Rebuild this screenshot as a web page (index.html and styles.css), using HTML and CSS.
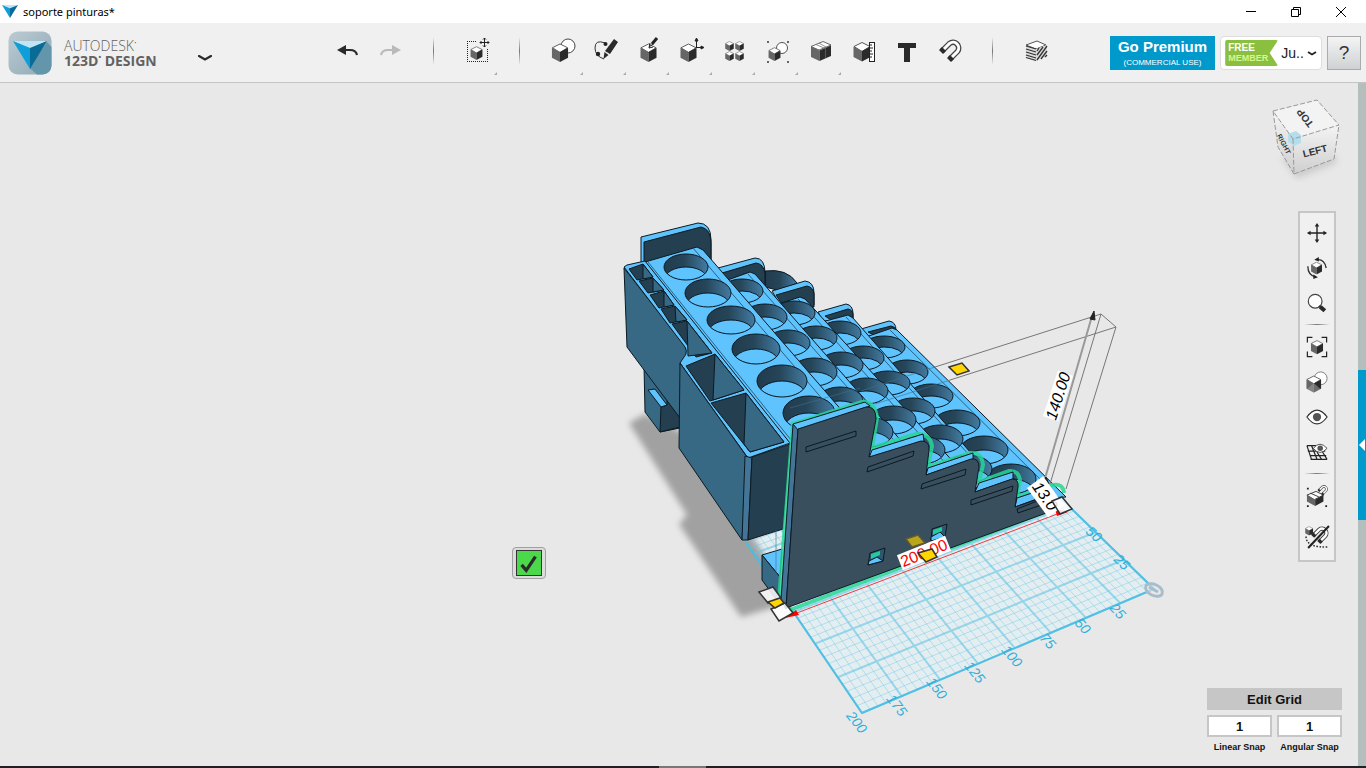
FILE: index.html
```html
<!DOCTYPE html>
<html lang="en">
<head>
    <meta charset="UTF-8">
    <meta name="viewport" content="width=device-width, initial-scale=1.0">
    <title>soporte pinturas*</title>
    <link rel="stylesheet" href="styles.css">
</head>
<body>
    <!-- Shared icon shapes -->
    <svg class="sprite" aria-hidden="true">
        <symbol id="cube" viewBox="0 0 18 20">
            <path d="M1 5L9 1l8 4-8 5z" fill="#fff" stroke="#555" stroke-width="1"/>
            <path d="M.5 5L9 9.500V20L.5 15.500z" fill="#666"/>
            <path d="M17.500 5L9 9.500V20l8.500-4.500z" fill="#2a2a2a"/>
        </symbol>
        <symbol id="logo" viewBox="0 0 34 28">
            <path d="M0 0h34L17 7z" fill="#bfe6f7"/>
            <path d="M0 0l17 7v21z" fill="#0f9fd8"/>
            <path d="M34 0L17 7v21z" fill="#0a6c96"/>
        </symbol>
        <symbol id="magnet" viewBox="0 0 24 24">
            <path d="M4 12L11.500 4.500a5.700 5.700 0 0 1 8 8L12 20" fill="none" stroke="#444" stroke-width="5.500"/>
            <path d="M4 12L11.500 4.500a5.700 5.700 0 0 1 8 8L12 20" fill="none" stroke="#fff" stroke-width="3"/>
            <path d="M1 11l3-3 4 4-3 3zM9 19l3-3 4 4-3 3z" fill="#2a2a2a"/>
        </symbol>
    </svg>

    <header class="title-bar">
        <svg class="title-logo" viewBox="0 0 34 28" preserveAspectRatio="none"><use href="#logo"/></svg>
        <span class="title-text">soporte pinturas*</span>
        <div class="window-controls">
            <button type="button" aria-label="Minimize"><svg viewBox="0 0 12 12"><path d="M1 5.500h10" /></svg></button>
            <button type="button" aria-label="Restore"><svg viewBox="0 0 12 12"><path d="M1.500 3.500h7v7h-7zM3.500 3.500v-2h7v7h-2"/></svg></button>
            <button type="button" aria-label="Close"><svg viewBox="0 0 12 12"><path d="M1 1l10 10M11 1L1 11"/></svg></button>
        </div>
    </header>

    <div class="toolbar">
        <div class="brand">
            <svg class="brand-logo" viewBox="0 0 44 44">
                <defs>
                    <linearGradient id="tile" x2="1" y2="1"><stop offset="0" stop-color="#bccbd3"/><stop offset="1" stop-color="#8fa9b6"/></linearGradient>
                </defs>
                <rect x=".5" y=".5" width="43" height="43" rx="9" fill="url(#tile)"/>
                <path d="M39 11l4.500 5v19q-1 8-9 8.500H29l-8-7z" fill="#6496ab"/>
                <use href="#logo" x="5" y="10" width="34" height="28"/>
            </svg>
            <div class="brand-name">
                <span class="brand-company">AUTODESK<sup>•</sup></span>
                <span class="brand-product">123D<sup>•</sup> DESIGN</span>
            </div>
            <button type="button" class="brand-menu" aria-label="Application menu">
                <svg viewBox="0 0 14 6"><path d="M1 1l6 3.500L13 1" fill="none" stroke="#2a2a2a" stroke-width="2.200" stroke-linecap="round"/></svg>
            </button>
        </div>

        <nav class="tools">
            <button type="button" class="tool" aria-label="Undo">
                <svg viewBox="0 0 26 26"><path d="M8 13h7q6 0 7 5" fill="none" stroke="#2a2a2a" stroke-width="2.200"/><path d="M2 13l9-5v10z" fill="#2a2a2a"/></svg>
            </button>
            <button type="button" class="tool" aria-label="Redo">
                <svg viewBox="0 0 26 26"><path d="M17 13h-7q-6 0-7 5" fill="none" stroke="#b9b9b9" stroke-width="2.200"/><path d="M23 13l-9-5v10z" fill="#b9b9b9"/></svg>
            </button>
            <span class="divider"></span>
            <button type="button" class="tool has-menu" aria-label="Transform">
                <svg viewBox="0 0 26 26">
                    <path d="M3 4.500h10M3.500 4v20M3 24.500h21M23.500 12v12" fill="none" stroke="#222" stroke-dasharray="1 1"/>
                    <use href="#cube" x="6" y="9" width="13" height="14"/>
                    <path d="M16 5.500h9M20.500 1v9M19 2.500L20.500 1 22 2.500M19 8.500l1.500 1.500L22 8.500M17.500 4L16 5.500 17.500 7M23.500 4L25 5.500 23.500 7" fill="none" stroke="#222"/>
                </svg>
            </button>
            <span class="divider"></span>
            <button type="button" class="tool has-menu" aria-label="Primitives">
                <svg viewBox="0 0 26 26"><circle cx="18" cy="9" r="7" fill="#fff" stroke="#444"/><use href="#cube" x="1" y="6" width="18" height="19"/></svg>
            </button>
            <button type="button" class="tool has-menu" aria-label="Sketch">
                <svg viewBox="0 0 26 26">
                    <path d="M12 6Q2 2 2 11q0 8 9 11" fill="none" stroke="#333"/>
                    <circle cx="12.500" cy="7" r="2" fill="#222"/><circle cx="5" cy="17" r="2.200" fill="#222"/>
                    <path d="M21 2l4 3-8 12-5-3zM11.500 15l4 3-5 4z" fill="#2a2a2a"/>
                </svg>
            </button>
            <button type="button" class="tool has-menu" aria-label="Construct">
                <svg viewBox="0 0 26 26"><use href="#cube" x="4" y="6" width="17" height="19"/><path d="M21 1l-5 6" stroke="#222" stroke-width="3"/><path d="M17 7l-4 3M14 6l-1 5 4-1" fill="none" stroke="#222"/></svg>
            </button>
            <button type="button" class="tool has-menu" aria-label="Modify">
                <svg viewBox="0 0 26 26"><use href="#cube" x="1" y="6" width="17" height="19"/><path d="M17.500 11V2M16 4l1.500-3L19 4zM17 10.500h7M22 9l3 1.500-3 1.500z" fill="#222" stroke="#222"/></svg>
            </button>
            <button type="button" class="tool has-menu" aria-label="Pattern">
                <svg viewBox="0 0 26 26"><use href="#cube" x="3" y="4" width="9" height="10"/><use href="#cube" x="13" y="4" width="9" height="10"/><use href="#cube" x="3" y="14" width="9" height="10"/><use href="#cube" x="13" y="14" width="9" height="10"/></svg>
            </button>
            <button type="button" class="tool has-menu" aria-label="Grouping">
                <svg viewBox="0 0 26 26"><path d="M2 4h2v2H2zM22 4h2v2h-2zM2 24h2v2H2zM22 24h2v2h-2z" fill="#666"/><circle cx="17" cy="11" r="5.500" fill="#fff" stroke="#555"/><use href="#cube" x="3" y="10" width="13" height="14"/></svg>
            </button>
            <button type="button" class="tool has-menu" aria-label="Combine">
                <svg viewBox="0 0 26 26">
                    <path d="M3 9.500l12-5 8 3.500-12 5z" fill="#fff" stroke="#444" stroke-width=".8"/><path d="M8 7.500l8 3.500M11 6l7 4" fill="none" stroke="#777" stroke-width=".8"/>
                    <path d="M3 9.500l8.500 4V24L3 20z" fill="#666"/><path d="M11.500 13.500L23 8.500V19l-11.500 5z" fill="#2a2a2a"/><path d="M17.500 11v10" stroke="#777" stroke-width=".6"/>
                </svg>
            </button>
            <button type="button" class="tool" aria-label="Measure">
                <svg viewBox="0 0 26 26"><use href="#cube" x="2" y="4" width="18" height="21"/><rect x="18.500" y="5.500" width="5" height="19" fill="#fff" stroke="#222"/><path d="M19 8h2M19 11h3M19 14h2M19 17h3M19 20h2" stroke="#222"/></svg>
            </button>
            <button type="button" class="tool" aria-label="Text">
                <svg viewBox="0 0 26 26"><path d="M4 6h18v5h-6v14h-6V11H4z" fill="#2a2a2a"/></svg>
            </button>
            <button type="button" class="tool" aria-label="Snap">
                <svg viewBox="0 0 26 26"><use href="#magnet" x="1" y="2" width="24" height="24"/></svg>
            </button>
            <span class="divider"></span>
            <button type="button" class="tool" aria-label="Material">
                <svg viewBox="0 0 26 26">
                    <path d="M3 8l11-4 9 4-10 4z" fill="#fff" stroke="#555"/>
                    <path d="M3 9l10 3v12L3 20zM13 12l11-4v11l-11 5z" fill="#ddd"/>
                    <path d="M3 9l10 3M3 12l10 3M3 15l10 3M3 18l10 3M3 20.500l10 3M14 23L24 9M14 18l6-8M14 14l2-3M18 22l6-8M22 20l2-2" stroke="#333" stroke-width="1.300"/>
                </svg>
            </button>
        </nav>

        <div class="account">
            <a href="#premium" class="premium">
                <span class="premium-title">Go Premium</span>
                <span class="premium-note">(COMMERCIAL USE)</span>
            </a>
            <button type="button" class="member">
                <span class="badge"><span class="badge-free">FREE</span><span class="badge-member">MEMBER</span></span>
                <span>Ju..</span>
                <svg viewBox="0 0 10 5"><path d="M1 1l4 2.500L9 1" fill="none" stroke="#222" stroke-width="1.800"/></svg>
            </button>
            <button type="button" class="help">?</button>
        </div>
    </div>

    <main class="workspace">
        <div class="canvas">
            <svg class="scene" viewBox="0 83 1358 683" preserveAspectRatio="xMidYMid meet">
                <defs>
                    <filter id="soft"><feGaussianBlur stdDeviation="3"/></filter>
                    <linearGradient id="wall"><stop offset="0" stop-color="#213b4d"/><stop offset=".45" stop-color="#264558"/><stop offset="1" stop-color="#437ca3"/></linearGradient>
                </defs>

                <path id="gridFill" class="grid-fill"/>
                <path class="shadow" d="M629 423l16-9 40 20 85 130 8 42-37 11-62-93 8-9z"/>
                <path id="gridMinor" class="grid-minor"/>
                <path id="gridMajor" class="grid-major"/>
                <path id="gridEdge" class="grid-edge"/>
                <g class="grid-label">
                    <text transform="translate(857 722) rotate(52)">200</text>
                    <text transform="translate(897 705) rotate(52)">175</text>
                    <text transform="translate(937 688) rotate(52)">150</text>
                    <text transform="translate(975 672) rotate(51)">125</text>
                    <text transform="translate(1012 656) rotate(50)">100</text>
                    <text transform="translate(1048 641) rotate(49)">75</text>
                    <text transform="translate(1083 626) rotate(48)">50</text>
                    <text transform="translate(1118 611) rotate(47)">25</text>
                    <text transform="translate(1122 562) rotate(43)">25</text>
                    <text transform="translate(1094 534) rotate(42)">50</text>
                </g>
                <ellipse class="origin" cx="1154" cy="590" rx="9" ry="5.500" transform="rotate(25 1154 590)"/>
                <path d="M1149 587l9 5" stroke="#a9bccb" stroke-width="3"/>

                <!-- Back supports -->
                <g class="solid">
                    <path class="light" d="M641 237l57-14q13 0 13 17v26h-70z"/>
                    <path class="dark" d="M644 242l57-15q10 2 10 16v23h-67z"/>
                    <path d="M765 271q22-3 32 12l-16 8-16-4z" fill="url(#wall)"/>
                    <path class="light" d="M718 268l37-10q10 0 10 15v12h-40z"/>
                    <path class="dark" d="M722 273l34-10q8 1 9 11v12h-35z"/>
                    <path class="light" d="M772 291l33-10q9 1 9 12v12h-34z"/>
                    <path class="dark" d="M776 295l31-9q6 1 7 8v13h-30z"/>
                    <path class="light" d="M818 312l28-8q7 1 7 10v7h-30z"/>
                    <path class="dark" d="M825 316l23-7q5 1 5 6v5h-22z"/>
                    <path class="light" d="M861 329l28-8q7 1 7 9v6h-30z"/>
                    <path class="dark" d="M868 332l23-6q5 1 5 4v5h-22z"/>
                </g>

                <!-- Shelves with round cups, filled by scene.js -->
                <g id="tiers"></g>

                <!-- Side trays -->
                <g class="solid">
                    <path class="side" d="M644 366l36 50v12l-20 4-15-20z"/>
                    <path class="dark" d="M661 407l6-2v-20l13 22v20l-20 5z"/>
                    <path class="light" d="M648 390l7-1 12 16-6 2z"/>
                    <path class="side" d="M624 268l61 78 2 6v65l-7 1-33-44-20-27z"/>
                    <path class="light" d="M624 267l3-2 18-4 145 182-42 15-68-95 6-9q1-4-1-7z"/>
                    <path class="dark" d="M629 269l14-5 10 13-16 3zM639 281l14-3 11 12-16 3zM650 295l14-4 10 14-15 3zM661 309l14-3 12 14-17 3zM672 324l15-3 25 32-16 4zM686 366l29-12 29 36-34 11zM711 403l35-10 38 49-34 10z"/>
                    <path class="side" d="M643 264l10 13-10 2zM653 278l11 12-11 2zM664 291l10 14-10 2zM675 306l12 14-11 2zM687 321l25 32-24 3zM715 354l29 36-31 10zM746 393l38 49-34 10-6-8z"/>
                    <path class="side" d="M680 363l67 94-5 83-63-92z"/>
                    <path class="post" d="M745 456l7 2-4 82h-6z"/>
                    <path class="dark" d="M752 457l38-13-7 85-35 11z"/>
                    <path class="light" d="M762 555l20-6-2 28z"/>
                    <path class="side" d="M762 555l18 22-2 25-16-22z"/>
                </g>

                <path class="wire" d="M935 367l166-53M947 381l169-54M1101 314l15 13M1101 314l-51 170M1116 327l-50 162"/>
                <path class="wire faint" d="M935 367l-74 24M947 381l-72 23M790 408l70-20M776 530v50"/>

                <!-- Selected front support -->
                <path class="outline" d="M779 600l14-176 69-22q13-1 15 16l-5 30 44-14q14-1 16 12l-4 21 42-14q12-1 13 12l-4 17 30-11q10-1 11 10l-3 16 36-12q10-2 11 8M790 610l265-102"/>
                <g class="solid">
                    <path class="post" d="M793 424l5 5-12 180-5-9z"/>
                    <path class="light" d="M793 424l72-22 5 4-72 24zM872 450l51-16 1 7-55 17zM928 468l45-15v6l-47 16zM979 483l34-11v7l-38 13zM1017 498l33-11 3 6-38 14z"/>
                    <path class="front" d="M798 429l68-22q10-1 10 12l-7 38 52-16q9 0 8 9l-3 25 45-16q8-1 8 8l-4 25 37-13q7 0 6 8l-3 20 38-13 7 14-274 100z"/>
                    <path class="slot" d="M806 447l50-16v5l-50 16zM868 467l46-16-1 5-46 16zM922 484l44-15-1 6-44 14zM971 500l42-14-1 5-41 14zM1017 509l28-11 2 5-29 10z"/>
                    <path class="slot hole" d="M870 553l15-5-2 13-15 4zM932 529l15-5-2 13-14 4z"/>
                    <path class="light" d="M869 561l8-4 6 4-15 4zM931 537l9-5 5 5-14 4z"/>
                </g>
                <path class="glint" d="M871 554l9-3v4l-9 4zM933 530l9-3v4l-9 4z"/>

                <!-- Dimensions and handles -->
                <path class="axis" d="M1092 316l-48 166"/>
                <path class="arrow" d="M1094 311l1 9-5-1zM1046 477l3 7-8-2z"/>
                <path class="red-line" d="M789 616l276-105"/>
                <path class="red-arrow" d="M785 618l11-8 3 5zM1068 512l-13-3 2 7z"/>
                <g class="dimension">
                    <g transform="translate(1058 396) rotate(-72)"><rect x="-24" y="-8" width="48" height="16"/><text>140.00</text></g>
                    <g transform="translate(1045 496) rotate(54)"><rect x="-17" y="-10" width="36" height="20"/><text>13.0</text></g>
                    <g class="red" transform="translate(924 553) rotate(-22)"><rect x="-26" y="-8" width="52" height="16"/><text>200.00</text></g>
                </g>
                <path class="handle" d="M949 367l13-4 7 8-12 4z"/>
                <path class="handle dim" d="M906 539l12-4 7 8-13 4z"/>
                <path class="handle" d="M918 553l14-4 5 8-11 5z"/>
                <path class="handle plain" d="M759 592l14-5 8 11-13 5zM771 609l14-6 8 10-14 8zM1052 501l10-4 10 12-12 5z"/>
                <path class="handle" d="M768 602l12-4 4 5-9 5z"/>
            </svg>

            <button type="button" class="confirm" aria-label="Confirm">
                <svg viewBox="0 0 26 26"><path d="M5 15l5 6L20 6" fill="none" stroke="#2a2a2a" stroke-width="3.500"/></svg>
            </button>

            <svg class="view-cube" viewBox="1266 94 80 90">
                <defs>
                    <linearGradient id="face" x2="0" y2="1"><stop offset="0" stop-color="#f4f4f4"/><stop offset="1" stop-color="#cfcfcf"/></linearGradient>
                </defs>
                <path d="M1281 158l16 21 40-16-2-8z" fill="#bbb" opacity=".6" filter="url(#soft)"/>
                <path d="M1273 111l20 28 1 35-16-27z" fill="url(#face)"/>
                <path d="M1293 139l46-14-5 34-40 15z" fill="url(#face)"/>
                <path d="M1273 111l44-11 22 25-46 14z" fill="#f3f3f3"/>
                <g class="cube-label">
                    <text transform="translate(1315 151) rotate(-14)">LEFT</text>
                    <text transform="translate(1305 118) rotate(232)">TOP</text>
                    <text class="small" transform="translate(1284 144) rotate(63)">RIGHT</text>
                </g>
                <path d="M1288 134l8-3 5 4v8l-7 3-6-4z" fill="#b5deec"/>
                <path d="M1273 111l44-11 22 25-46 14zM1273 111l5 36 16 27-1-35M1294 174l40-15 5-34" fill="none" stroke="#999" stroke-dasharray="5 2"/>
            </svg>

            <nav class="view-tools">
                <button type="button" aria-label="Pan"><svg viewBox="0 0 24 24"><path d="M12 3v18M3 12h18" stroke="#222" stroke-width="1.500"/><path d="M12 1l2.500 4h-5zM12 23l2.500-4h-5zM1 12l4-2.500v5zM23 12l-4-2.500v5z" fill="#222"/></svg></button>
                <button type="button" aria-label="Orbit"><svg viewBox="0 0 24 24"><use href="#cube" x="5" y="5" width="13" height="14"/><path d="M12 3q8-1 10 9M2 10q0 10 9 12" fill="none" stroke="#333" stroke-width="1.500"/><path d="M9 3l5-3v5zM13 22l-5-3v5z" fill="#222"/></svg></button>
                <button type="button" aria-label="Zoom"><svg viewBox="0 0 24 24"><circle cx="10" cy="10" r="7.500" fill="#fff" stroke="#444" stroke-width="1.300"/><path d="M14.500 15l1.500 2" stroke="#333" stroke-width="2"/><path d="M15.500 16l5 4.500" stroke="#2a2a2a" stroke-width="4.500"/></svg></button>
                <span class="rule"></span>
                <button type="button" aria-label="Fit"><svg viewBox="0 0 24 24"><path d="M1.500 7V1.500H7M17 1.500h5.500V7M1.500 17v5.500H7M17 22.500h5.500V17" fill="none" stroke="#222" stroke-width="1.300"/><use href="#cube" x="5" y="4" width="14" height="16"/></svg></button>
                <button type="button" aria-label="Shading"><svg viewBox="0 0 24 24"><circle cx="16" cy="8" r="7" fill="#fff" stroke="#777"/><use href="#cube" x="0" y="4" width="17" height="20"/><path d="M8.500 13L1 20l7.500 3.500L16 20z" fill="#999" opacity=".6"/></svg></button>
                <button type="button" aria-label="Visibility"><svg viewBox="0 0 24 24"><path d="M1 12q11-15 22 0-11 15-22 0z" fill="#fff" stroke="#333" stroke-width="1.300"/><circle cx="12" cy="12" r="4.500" fill="#555"/></svg></button>
                <button type="button" aria-label="Grid visibility"><svg viewBox="0 0 24 24"><path d="M1 5h10M2 11h19M4 16h18M5 20h18M1 5l5 15M6 5l6 15M12 12l5 8M18 12l5 8" fill="none" stroke="#222" stroke-width="1.300"/><path d="M8 8q7-9 15 0-8 9-15 0z" fill="#fff" stroke="#444"/><circle cx="15.500" cy="8" r="3" fill="#555"/></svg></button>
                <span class="rule"></span>
                <button type="button" aria-label="Snap to grid"><svg viewBox="0 0 24 24"><path d="M1 3h2v2H1zM1 22h2v2H1zM21 22h2v2h-2z" fill="#222"/><path d="M1 11l10-4 8 4-10 5z" fill="#fff" stroke="#333"/><path d="M5 9l9 4" stroke="#333"/><path d="M1 11l9 5v7l-9-5z" fill="#666"/><path d="M10 16l9-5v7l-9 5z" fill="#2a2a2a"/><use href="#magnet" x="12" y="0" width="12" height="12"/></svg></button>
                <button type="button" class="last" aria-label="Snap off"><svg viewBox="0 0 24 24"><use href="#cube" x="0" y="2" width="8" height="9"/><use href="#magnet" x="5" y="2" width="18" height="18"/><path d="M1 12q0 11 22 10" fill="none" stroke="#333" stroke-width="1.500" stroke-dasharray="1.500 1.500"/><path d="M3 23L23 2" stroke="#222" stroke-width="2"/></svg></button>
            </nav>

            <form class="snap">
                <button type="button" class="edit-grid">Edit Grid</button>
                <div class="snap-field">
                    <input type="text" id="linear" value="1">
                    <label for="linear">Linear Snap</label>
                </div>
                <div class="snap-field">
                    <input type="text" id="angular" value="1">
                    <label for="angular">Angular Snap</label>
                </div>
            </form>
        </div>
        <aside class="drawer">
            <button type="button" class="drawer-handle" aria-label="Open panel"></button>
        </aside>
    </main>
    <footer class="taskbar"></footer>

    <script src="scene.js"></script>
</body>
</html>
```

FILE: styles.css
```css
* {
    margin: 0;
    padding: 0;
    box-sizing: border-box;
}

body {
    display: flex;
    flex-direction: column;
    height: 100vh;
    overflow: hidden;
    background: #e8e8e8;
    color: #222;
    font-family: "Liberation Sans", Arial, sans-serif;
}

button {
    display: flex;
    align-items: center;
    justify-content: center;
    border: none;
    background: none;
    font-family: inherit;
    cursor: pointer;
}

.sprite {
    position: absolute;
    width: 0;
    height: 0;
}

/* Title bar */
.title-bar {
    display: flex;
    align-items: center;
    height: 23px;
    padding: 0 3px 0 2px;
    background: #fff;
}

.title-logo {
    width: 16px;
    height: 13px;
    margin-right: 5px;
}

.title-text {
    color: #000;
    font-family: "Noto Sans", sans-serif;
    font-size: 11px;
    line-height: 22px;
}

.window-controls {
    display: flex;
    margin-left: auto;
}

.window-controls button {
    width: 45px;
    height: 21px;
}

.window-controls svg {
    width: 12px;
    height: 12px;
    fill: none;
    stroke: #000;
}

/* Toolbar */
.toolbar {
    display: flex;
    height: 60px;
    background: #f0f0f0;
    border-bottom: 1px solid #c4c4c4;
}

.brand {
    display: flex;
    flex: 0 0 326px;
    align-items: flex-start;
    padding: 8px;
}

.brand-logo {
    width: 44px;
    height: 44px;
}

.brand-name {
    display: flex;
    flex-direction: column;
    width: 98px;
    margin: 7px 36px 0 12px;
    color: #626262;
    font-family: "Open Sans", sans-serif;
    font-size: 14px;
    line-height: 15px;
    white-space: nowrap;
}

.brand-name sup {
    font-size: 7px;
    line-height: 1px;
}

.brand-company {
    font-weight: 300;
}

.brand-product {
    font-weight: 700;
}

.brand-menu svg {
    width: 14px;
    height: 6px;
    margin-top: 24px;
}

.tools {
    display: flex;
}

.tool {
    position: relative;
    align-items: flex-start;
    width: 43px;
    padding-top: 14px;
}

.tool svg {
    width: 26px;
    height: 26px;
}

.has-menu::after {
    content: "";
    position: absolute;
    right: 1px;
    top: 49px;
    border-bottom: 3px solid #aaa;
    border-left: 3px solid transparent;
}

.divider {
    width: 1px;
    height: 28px;
    margin: 14px 21px 0;
    background: linear-gradient(transparent, #777, transparent);
}

.account {
    display: flex;
    align-items: flex-start;
    gap: 5px;
    margin-left: auto;
    padding: 13px 5px 0 0;
}

.premium {
    display: flex;
    flex-direction: column;
    align-items: center;
    width: 105px;
    height: 34px;
    background: #0099cc;
    color: #fff;
    text-decoration: none;
}

.premium-title {
    font-size: 15px;
    font-weight: bold;
    line-height: 22px;
}

.premium-note {
    font-size: 8px;
    line-height: 10px;
}

.member {
    gap: 3px;
    width: 102px;
    height: 34px;
    background: #fff;
    border: 1px solid #ddd;
    border-radius: 4px;
    color: #222;
    font-size: 14px;
}

.member svg {
    width: 10px;
    height: 5px;
}

.badge {
    display: flex;
    flex-direction: column;
    align-items: flex-start;
    width: 53px;
    height: 26px;
    padding: 2px 3px;
    background: #8bbf3f;
    border-radius: 2px;
    clip-path: polygon(0 0, 100% 0, 84% 50%, 100% 100%, 0 100%);
    font-size: 9px;
    font-weight: bold;
    line-height: 11px;
}

.badge-free {
    color: #fff;
    font-size: 10px;
}

.badge-member {
    color: #d5f78e;
}

.help {
    width: 34px;
    height: 34px;
    background: linear-gradient(#f4f4f4, #cfd1d3);
    border: 1px solid #aaa;
    color: #333;
    font-size: 19px;
}

/* Workspace */
.workspace {
    display: flex;
    flex: 1;
    min-height: 0;
}

.canvas {
    position: relative;
    flex: 1;
    min-width: 0;
}

.scene {
    display: block;
    width: 100%;
    height: 100%;
}

.shadow {
    fill: #a1a1a1;
    filter: url(#soft);
}

.grid-fill {
    fill: #e4eef1;
}

.grid-minor,
.grid-major,
.grid-edge {
    fill: none;
    stroke: #62c4e4;
    stroke-width: 1;
    stroke-opacity: 0.4;
}

.grid-major {
    stroke-width: 2;
    stroke-opacity: 0.6;
}

.grid-edge {
    stroke: #48bde3;
    stroke-width: 2;
    stroke-opacity: 0.9;
}

.grid-label {
    fill: #2fb0dc;
    font-size: 14px;
    font-style: italic;
    text-anchor: middle;
    dominant-baseline: central;
}

.origin {
    fill: #e8e8e8;
    fill-opacity: 0.6;
    stroke: #a9bccb;
    stroke-width: 3;
}

.solid path,
.tier {
    stroke: #0b1a24;
    stroke-width: 1;
    stroke-linejoin: round;
}

.light,
.tier {
    fill: #5fc3fd;
}

.side {
    fill: #376884;
}

.post {
    fill: #447496;
}

.dark {
    fill: #233f50;
}

.front {
    fill: #394f5d;
}

.solid .slot {
    fill: none;
}

.solid .hole {
    fill: #2c5870;
}

.tier-line {
    fill: none;
    stroke: #2b6284;
}

.rim {
    fill: none;
    stroke: #0b1a24;
}

.outline {
    fill: none;
    stroke: #27d696;
    stroke-width: 4;
    stroke-opacity: 0.85;
}

.glint {
    fill: #25c99b;
}

.wire {
    fill: none;
    stroke: #777;
}

.faint {
    stroke: #3c6f8c;
    stroke-opacity: 0.6;
}

.axis {
    stroke: #999;
    stroke-width: 2;
}

.arrow {
    fill: #222;
    stroke: #222;
}

.red-line {
    stroke: #ee3b3b;
}

.red-arrow {
    fill: #f00;
}

.dimension {
    font-size: 16px;
    font-style: italic;
    text-anchor: middle;
    dominant-baseline: central;
}

.dimension rect {
    fill: #fff;
}

.dimension .red {
    fill: #f00;
    font-style: normal;
}

.handle {
    fill: #ffd600;
    stroke: #333;
    stroke-width: 1.5px;
}

.dim {
    fill: #b9a61b;
    stroke: #625b2e;
}

.plain {
    fill: #fff;
    fill-opacity: 0.85;
}

.confirm {
    position: absolute;
    left: 512px;
    top: 464px;
    width: 34px;
    height: 32px;
    background: #dcdcdc;
    border: 1px solid #a0a0a0;
    border-radius: 4px;
}

.confirm svg {
    width: 26px;
    height: 26px;
    background: #4bd84b;
    border: 1px solid #333;
}

.view-cube {
    position: absolute;
    right: 12px;
    top: 11px;
    width: 80px;
    height: 90px;
}

.cube-label {
    fill: #333;
    font-size: 10px;
    font-weight: bold;
    text-anchor: middle;
    dominant-baseline: central;
}

.small {
    font-size: 7px;
}

.view-tools {
    position: absolute;
    right: 22px;
    top: 128px;
    display: flex;
    flex-direction: column;
    width: 38px;
    padding-top: 2px;
    background: #f0f0f0;
    border: 2px solid #c6c6c6;
}

.view-tools button {
    height: 35px;
}

.view-tools .last {
    height: 47px;
}

.view-tools svg {
    width: 22px;
    height: 22px;
}

.view-tools .last svg {
    width: 25px;
    height: 25px;
}

.rule {
    height: 1px;
    margin: 4px;
    background: linear-gradient(90deg, transparent, #777, transparent);
}

.snap {
    position: absolute;
    right: 16px;
    bottom: 13px;
    display: grid;
    grid-template-columns: 65px 65px;
    gap: 5px;
}

.edit-grid {
    grid-column: 1 / 3;
    height: 22px;
    background: #c6c6c6;
    color: #111;
    font-size: 13px;
    font-weight: bold;
}

.snap-field {
    display: flex;
    flex-direction: column;
    align-items: center;
    gap: 4px;
}

.snap-field input {
    width: 100%;
    height: 22px;
    background: #fff;
    border: 2px solid #c6c6c6;
    color: #111;
    font-family: inherit;
    font-size: 13px;
    font-weight: bold;
    text-align: center;
}

.snap-field label {
    color: #111;
    font-size: 9px;
    font-weight: bold;
    line-height: 12px;
    white-space: nowrap;
}

.drawer {
    width: 8px;
    background: #b4bfbd;
}

.drawer-handle {
    width: 8px;
    height: 150px;
    margin-top: 287px;
    background: #0099cc;
}

.drawer-handle::before {
    content: "";
    border: 6px solid transparent;
    border-left: none;
    border-right-color: #fff;
}

.taskbar {
    height: 2px;
    background: linear-gradient(90deg, #1f2023 659px, #777 659px 706px, #1f2023 706px);
}
```

FILE: scene.js
```js
const SVG_NS = 'http://www.w3.org/2000/svg';

// Ground plane corners: [0,0], [200,0], [200,100], [0,100] in millimetres
const ground = [[1154, 589], [862, 713], [773, 582], [1043, 481]];

// Maps the unit square to the four corners with perspective
function projector(q) {
    const [a, b, c, d] = q;
    const dx1 = b[0] - c[0], dx2 = d[0] - c[0], sx = a[0] - b[0] + c[0] - d[0];
    const dy1 = b[1] - c[1], dy2 = d[1] - c[1], sy = a[1] - b[1] + c[1] - d[1];
    const den = dx1 * dy2 - dx2 * dy1;
    const g = (sx * dy2 - dx2 * sy) / den;
    const h = (dx1 * sy - sx * dy1) / den;
    return (x, y) => {
        const u = x / 200, v = y / 100;
        const w = g * u + h * v + 1;
        const px = ((b[0] - a[0] + g * b[0]) * u + (d[0] - a[0] + h * d[0]) * v + a[0]) / w;
        const py = ((b[1] - a[1] + g * b[1]) * u + (d[1] - a[1] + h * d[1]) * v + a[1]) / w;
        return px.toFixed(1) + ' ' + py.toFixed(1);
    };
}

const project = projector(ground);
const depth = 135;

function drawGrid() {
    let minor = '', major = '';
    for (let x = 0; x <= 200; x += 5) {
        const line = `M${project(x, 0)}L${project(x, depth)}`;
        if (x % 25) minor += line; else major += line;
    }
    for (let y = 0; y <= depth; y += 5) {
        const line = `M${project(0, y)}L${project(200, y)}`;
        if (y % 25) minor += line; else major += line;
    }
    document.getElementById('gridMinor').setAttribute('d', minor);
    document.getElementById('gridMajor').setAttribute('d', major);
    document.getElementById('gridEdge').setAttribute('d', `M${project(0, depth)}L${project(0, 0)}L${project(200, 0)}L${project(200, depth)}`);
    document.getElementById('gridFill').setAttribute('d', `M${project(0, depth)}L${project(0, 0)}L${project(200, 0)}L${project(200, depth)}Z`);
}

// Shelves from the lowest to the highest, each cup is [cx, cy, rx, ry]
const tiers = [
    {
        shape: 'M866 337L892 328L897 330L1066 497L1015 500L960 460Z',
        line: 'M890 330L1058 497',
        cups: [[884, 347, 21, 11], [907, 372, 21, 12], [931, 396, 22, 12], [957, 423, 23, 13], [984, 450, 24, 14], [1011, 479, 25, 15]]
    },
    {
        shape: 'M822 322L848 315L853 318L1012 500L970 480L930 440Z',
        line: 'M846 317L1002 492',
        cups: [[840, 333, 21, 12], [863, 358, 21, 12], [888, 383, 22, 12], [913, 411, 22, 13], [940, 439, 23, 14], [968, 469, 24, 14]]
    },
    {
        shape: 'M775 305L800 297L805 299L978 489L930 480L880 430Z',
        line: 'M798 299L966 486',
        cups: [[794, 313, 21, 12], [816, 338, 21, 12], [841, 365, 22, 13], [866, 391, 22, 13], [893, 420, 23, 14], [921, 450, 24, 14]]
    },
    {
        shape: 'M722 282L750 272L755 274L932 476L880 470L830 420Z',
        line: 'M748 274L920 470',
        cups: [[742, 291, 21, 12], [765, 317, 22, 13], [788, 343, 22, 13], [814, 372, 23, 14], [840, 401, 23, 14], [869, 432, 24, 15]]
    },
    {
        shape: 'M645 262L697 247L703 250L850 420L840 450L790 444Z',
        line: 'M648 262L791 440M693 248L842 422',
        cups: [[686, 267, 22, 13], [708, 293, 23, 14], [731, 320, 24, 14], [756, 349, 24, 15], [782, 381, 25, 16], [809, 413, 26, 17]]
    }
];

function add(parent, name, attrs) {
    const el = document.createElementNS(SVG_NS, name);
    for (const key in attrs) {
        el.setAttribute(key, attrs[key]);
    }
    parent.appendChild(el);
    return el;
}

function drawTiers() {
    const root = document.getElementById('tiers');
    tiers.forEach((tier, t) => {
        add(root, 'path', { d: tier.shape, class: 'tier' });
        add(root, 'path', { d: tier.line, class: 'tier-line' });
        tier.cups.forEach(([cx, cy, rx, ry], i) => {
            const id = `cup-${t}-${i}`;
            const clip = add(root, 'clipPath', { id });
            add(clip, 'ellipse', { cx, cy, rx, ry });
            add(root, 'ellipse', { cx, cy, rx, ry, fill: 'url(#wall)' });
            const floor = add(root, 'g', { 'clip-path': `url(#${id})` });
            add(floor, 'ellipse', { cx, cy: cy + ry - 1, rx: rx - 1, ry: ry - 1, class: 'tier' });
            add(root, 'ellipse', { cx, cy, rx, ry, class: 'rim' });
        });
    });
}

drawGrid();
drawTiers();
```
